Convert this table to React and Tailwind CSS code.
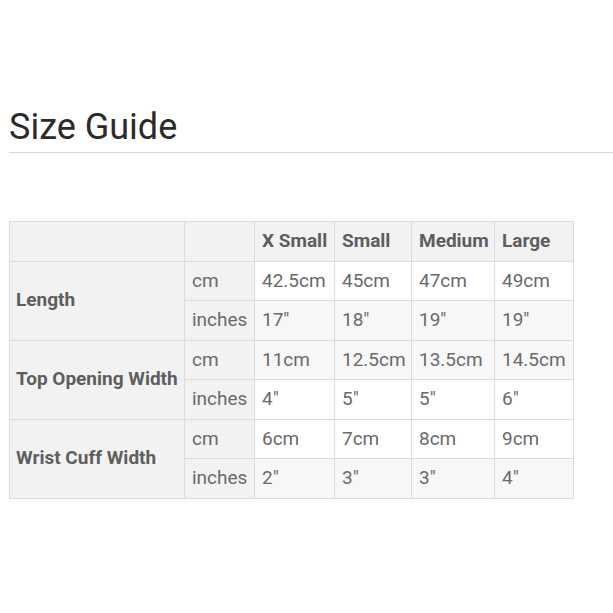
import { Fragment } from 'react';

const SIZES = ['X Small', 'Small', 'Medium', 'Large'];

const ROWS = [
  { label: 'Length', cm: ['42.5cm', '45cm', '47cm', '49cm'], inches: ['17"', '18"', '19"', '19"'], shade: [false, true] },
  { label: 'Top Opening Width', cm: ['11cm', '12.5cm', '13.5cm', '14.5cm'], inches: ['4"', '5"', '5"', '6"'], shade: [true, false] },
  { label: 'Wrist Cuff Width', cm: ['6cm', '7cm', '8cm', '9cm'], inches: ['2"', '3"', '3"', '4"'], shade: [false, true] },
];

const cell = 'border border-[#dcdcdc] pl-[7px] pr-[4px] align-middle h-[39.5px]';

export default function App() {
  return (
    <div className="w-[613px] h-[613px] bg-white overflow-hidden font-['Roboto',sans-serif]">
      <div className="pt-[106px] pl-[9px]">
        <h1 className="text-[36px] leading-[42px] font-normal text-[#2b2b2b]">Size Guide</h1>
        <div className="mt-[4px] border-t border-[#d6d6d6]" />
      </div>

      <table className="mt-[68px] ml-[9px] border-collapse text-[19px] text-[#6a6a6a] table-fixed w-[564px]">
        <colgroup>
          <col className="w-[175px]" />
          <col className="w-[70px]" />
          <col className="w-[80px]" />
          <col className="w-[77px]" />
          <col className="w-[83px]" />
          <col className="w-[79px]" />
        </colgroup>
        <thead>
          <tr className="bg-[#f2f2f2]">
            <th className={cell} />
            <th className={cell} />
            {SIZES.map((s) => (
              <th key={s} className={`${cell} text-left font-bold text-[#5e5e5e] whitespace-nowrap`}>
                {s}
              </th>
            ))}
          </tr>
        </thead>
        <tbody>
          {ROWS.map((r) => (
            <Fragment key={r.label}>
              <tr>
                <td rowSpan={2} className={`${cell} !pl-[6px] bg-[#f2f2f2] font-bold text-[#5e5e5e] whitespace-nowrap`}>
                  {r.label}
                </td>
                <td className={`${cell} bg-[#f2f2f2]`}>cm</td>
                {r.cm.map((v, i) => (
                  <td key={i} className={`${cell} whitespace-nowrap ${r.shade[0] ? 'bg-[#f7f7f7]' : 'bg-white'}`}>
                    {v}
                  </td>
                ))}
              </tr>
              <tr>
                <td className={`${cell} bg-[#f2f2f2]`}>inches</td>
                {r.inches.map((v, i) => (
                  <td key={i} className={`${cell} whitespace-nowrap ${r.shade[1] ? 'bg-[#f7f7f7]' : 'bg-white'}`}>
                    {v}
                  </td>
                ))}
              </tr>
            </Fragment>
          ))}
        </tbody>
      </table>
    </div>
  );
}
